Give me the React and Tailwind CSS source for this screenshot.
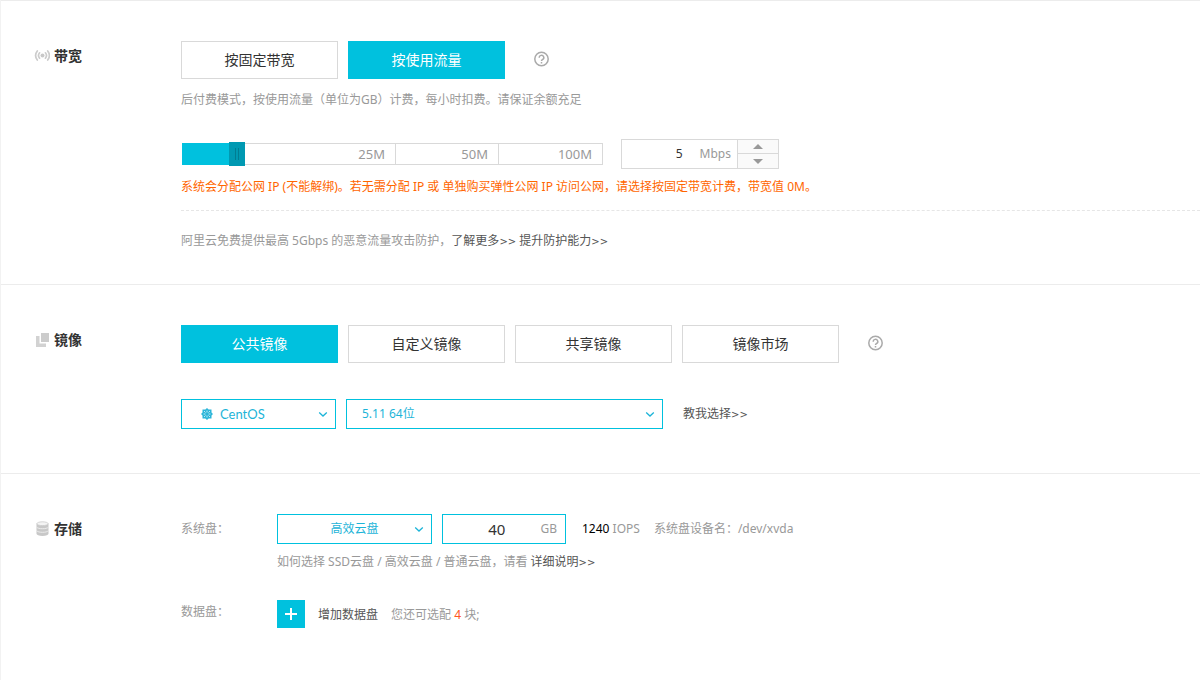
import { useState } from 'react';

// track position (px on a 421px scale) for the main bandwidth values
const STOPS = [[0, 0], [5, 47], [25, 213], [50, 316], [100, 421]];

const toPercent = (value) => {
  for (let i = 1; i < STOPS.length; i++) {
    const [v0, x0] = STOPS[i - 1];
    const [v1, x1] = STOPS[i];
    if (value <= v1) return ((x0 + ((value - v0) / (v1 - v0)) * (x1 - x0)) / 421) * 100;
  }
  return 100;
};

function SignalIcon() {
  return (
    <svg className="w-4 h-4" viewBox="0 0 16 16" fill="none" stroke="#ccc" strokeWidth="1.7" strokeLinecap="round" aria-hidden="true">
      <circle cx="8.500" cy="7.500" r="2" fill="#c8c8c8" stroke="none" />
      <path d="M5.600 4.800a4.200 4.200 0 0 0 0 5.400M11.400 4.800a4.200 4.200 0 0 1 0 5.400M3.300 3a7.400 7.400 0 0 0 0 9M13.700 3a7.400 7.400 0 0 1 0 9" />
    </svg>
  );
}

function ImageIcon() {
  return (
    <svg className="w-4 h-4" viewBox="0 0 16 16" aria-hidden="true">
      <path d="M7 1h8v9H7z" fill="#ccc" />
      <path d="M2 4h3.500v7.500H12V15H2z" fill="#d2d2d2" />
    </svg>
  );
}

function DiskIcon() {
  return (
    <svg className="w-4 h-4" viewBox="0 0 16 16" aria-hidden="true">
      <path d="M2.500 2.600v10.200C2.500 14 5 15 8.500 15s6-1 6-2.200V2.600z" fill="#c8c8c8" />
      <ellipse cx="8.500" cy="2.700" rx="5.600" ry="1.900" fill="#f4f4f4" stroke="#ccc" strokeWidth="0.8" />
      <path d="M2.500 6c1 1.300 3.400 1.700 6 1.700s5-.4 6-1.700M2.500 9.600c1 1.300 3.400 1.700 6 1.700s5-.4 6-1.700" fill="none" stroke="#eee" strokeWidth="0.9" />
    </svg>
  );
}

function CentosIcon() {
  return (
    <svg className="w-3 h-3" viewBox="0 0 12 12" aria-hidden="true">
      <path d="M6 0l1.600 1.500h2.900v2.900L12 6l-1.500 1.600v2.900H7.600L6 12l-1.600-1.500H1.500V7.600L0 6l1.500-1.600V1.500h2.900z" fill="#2bb5d9" />
      <path d="M6 2.500v2M6 7.500v2M2.500 6h2M7.500 6h2M3 3l1.500 1.500M7.500 7.500L9 9M9 3L7.500 4.500M4.500 7.500L3 9" stroke="#fff" strokeWidth="0.7" />
    </svg>
  );
}

function HelpButton() {
  return (
    <button className="ml-[18px] w-[18px] h-[18px] flex justify-center" aria-label="帮助">
      <svg className="w-4 h-4" viewBox="0 0 16 16" fill="none" stroke="#aaa" strokeWidth="1.5">
        <circle cx="7.500" cy="8" r="6.700" />
        <path d="M5.200 6.700a2.300 2.200 0 1 1 3.500 1.700c-.8.500-1.200.8-1.200 1.700" />
        <path d="M7.500 11v1.500" />
      </svg>
    </button>
  );
}

function Option({ active, onClick, children }) {
  return (
    <button
      onClick={onClick}
      aria-pressed={active}
      className={`w-[157px] h-[38px] border text-sm ${
        active ? 'bg-[#00c1de] border-[#00c1de] text-white' : 'bg-white border-[#d9d9d9] text-[#333]'
      }`}
    >
      {children}
    </button>
  );
}

function Select({ label, width, text, icon, options }) {
  return (
    <div className={`relative h-[30px] ${width}`}>
      <select
        aria-label={label}
        className={`w-full h-full appearance-none bg-white border border-[#00c1de] text-[#1cb4d8] ${text}`}
      >
        {options.map((o) => (
          <option key={o}>{o}</option>
        ))}
      </select>
      {icon && <span className="absolute left-5 top-[9px] pointer-events-none">{icon}</span>}
      <svg className="absolute right-2 top-[10px] w-[10px] h-[10px] pointer-events-none" viewBox="0 0 10 10" fill="none" stroke="#1cb4d8" strokeWidth="1.300">
        <path d="M1.200 3.500L5 7l3.800-3.500" />
      </svg>
    </div>
  );
}

function MoreLink({ children }) {
  return (
    <a href="#" className="text-[#555]">
      {children}
      <span className="font-['DejaVu_Sans',sans-serif] text-[10px]">&gt;&gt;</span>
    </a>
  );
}

function Section({ icon, title, className, children }) {
  return (
    <section className={`flex border-t border-[#ececec] pt-10 ${className}`}>
      <h2 className="w-[180px] shrink-0 h-5 mt-[5px] pl-[33px] flex items-center gap-1 text-sm font-bold text-[#333]">
        {icon}
        {title}
      </h2>
      <div className="flex-1 min-w-0">{children}</div>
    </section>
  );
}

export default function App() {
  const [billing, setBilling] = useState('按使用流量');
  const [source, setSource] = useState('公共镜像');
  const [mbps, setMbps] = useState(5);
  const [size, setSize] = useState(40);

  const changeMbps = (v) => setMbps(Math.min(100, Math.max(0, Number(v) || 0)));

  return (
    <main className="min-h-screen bg-white border-l border-[#f2f2f2] font-['Noto_Sans','Noto_Sans_CJK_SC',sans-serif] text-xs leading-5 text-[#999]">
      {/* Bandwidth */}
      <Section icon={<SignalIcon />} title="带宽" className="pb-8">
        <div className="flex items-center gap-[10px]">
          {['按固定带宽', '按使用流量'].map((name) => (
            <Option key={name} active={billing === name} onClick={() => setBilling(name)}>
              {name}
            </Option>
          ))}
          <HelpButton />
        </div>
        <p className="h-5 mt-[11px] leading-5">后付费模式，按使用流量（单位为GB）计费，每小时扣费。请保证余额充足</p>

        <div className="flex items-center mt-[29px]">
          <div className="relative w-[421px] h-[22px] ml-px flex border border-[#d9d9d9] text-[13px]">
            <div className="w-[213px] border-r border-[#d9d9d9] pr-[10px] text-right">25M</div>
            <div className="w-[103px] border-r border-[#d9d9d9] pr-[10px] text-right">50M</div>
            <div className="flex-1 pr-[10px] text-right">100M</div>
            <div className="absolute -inset-px">
              <div className="h-full bg-[#00c1de]" style={{ width: `${toPercent(mbps)}%` }} />
              <div
                className="absolute -top-px w-4 h-6 bg-[#0099b2] flex items-center justify-center gap-[2px]"
                style={{ left: `${toPercent(mbps)}%` }}
              >
                <span className="w-px h-3 bg-[#007d92]" />
                <span className="w-px h-3 bg-[#007d92]" />
              </div>
            </div>
            <input
              type="range"
              min="0"
              max="100"
              value={mbps}
              onChange={(e) => changeMbps(e.target.value)}
              aria-label="带宽"
              className="absolute inset-0 w-full h-full opacity-0 cursor-pointer"
            />
          </div>

          <div className="ml-[18px] w-[158px] h-[30px] flex border border-[#d9d9d9]">
            <label className="flex-1 min-w-0 flex items-center pr-[6px] text-[#999]">
              <input
                type="text"
                value={mbps}
                onChange={(e) => changeMbps(e.target.value)}
                className="flex-1 min-w-0 mr-[17px] text-right text-[#333] outline-none"
              />
              Mbps
            </label>
            <div className="w-[41px] flex flex-col border-l border-[#d9d9d9] bg-[#fafafa]">
              <button className="h-[14px] flex items-center justify-center border-b border-[#d9d9d9]" onClick={() => changeMbps(mbps + 1)} aria-label="增加">
                <svg className="w-[10px] h-[5px]" viewBox="0 0 10 5" fill="#999">
                  <path d="M5 0l5 5H0z" />
                </svg>
              </button>
              <button className="flex-1 flex items-center justify-center" onClick={() => changeMbps(mbps - 1)} aria-label="减少">
                <svg className="w-[10px] h-[5px]" viewBox="0 0 10 5" fill="#999">
                  <path d="M5 5L0 0h10z" />
                </svg>
              </button>
            </div>
          </div>
        </div>

        <p className="h-5 mt-2 leading-5 text-[#ff6600]">
          系统会分配公网 IP (不能解绑)。若无需分配 IP 或 单独购买弹性公网 IP 访问公网，请选择按固定带宽计费，带宽值 0M。
        </p>
        <p className="mt-[13px] pt-5 border-t border-dashed border-[#e6e6e6]">
          阿里云免费提供最高 5Gbps 的恶意流量攻击防护，<MoreLink>了解更多</MoreLink> <MoreLink>提升防护能力</MoreLink>
        </p>
      </Section>

      {/* Image */}
      <Section icon={<ImageIcon />} title="镜像" className="pb-11">
        <div className="flex items-center gap-[10px]">
          {['公共镜像', '自定义镜像', '共享镜像', '镜像市场'].map((name) => (
            <Option key={name} active={source === name} onClick={() => setSource(name)}>
              {name}
            </Option>
          ))}
          <HelpButton />
        </div>
        <div className="flex items-center gap-[10px] mt-9">
          <Select
            label="操作系统"
            width="w-[155px]"
            text="pl-[38px] text-[13px] font-['Lato',sans-serif]"
            icon={<CentosIcon />}
            options={['CentOS']}
          />
          <Select label="版本" width="w-[317px]" text="pl-[15px]" options={['5.11 64位']} />
          <span className="ml-[10px]">
            <MoreLink>教我选择</MoreLink>
          </span>
        </div>
      </Section>

      {/* Storage */}
      <Section icon={<DiskIcon />} title="存储" className="pb-10">
        <div className="flex">
          <div className="w-24 shrink-0 pt-[5px]">系统盘：</div>
          <div>
            <div className="flex items-center">
              <Select label="系统盘类型" width="w-[155px]" text="text-center [text-align-last:center]" options={['高效云盘']} />
              <label className="ml-[10px] w-[124px] h-[30px] flex items-center pl-[10px] pr-2 border border-[#00c1de]">
                <input
                  type="text"
                  value={size}
                  onChange={(e) => setSize(e.target.value)}
                  className="flex-1 min-w-0 text-center text-[15px] text-[#333] outline-none"
                />
                GB
              </label>
              <span className="ml-4">
                <span className="text-black">1240</span> IOPS
              </span>
              <span className="ml-[14px]">系统盘设备名：/dev/xvda</span>
            </div>
            <p className="h-5 mt-2">
              如何选择 SSD云盘 / 高效云盘 / 普通云盘，请看 <MoreLink>详细说明</MoreLink>
            </p>
          </div>
        </div>
        <div className="flex mt-7">
          <div className="w-24 shrink-0 pt-0.5">数据盘：</div>
          <div className="flex items-center">
            <button className="w-7 h-7 bg-[#00c1de] flex items-center justify-center" aria-label="增加数据盘">
              <svg className="w-3 h-3" viewBox="0 0 12 12" stroke="#fff" strokeWidth="2">
                <path d="M6 0v12M0 6h12" />
              </svg>
            </button>
            <span className="ml-[13px] pt-0.5 text-[#555]">增加数据盘</span>
            <span className="ml-[13px] pt-0.5">
              您还可选配 <span className="text-[#ff5522]">4</span> 块;
            </span>
          </div>
        </div>
      </Section>
    </main>
  );
}
